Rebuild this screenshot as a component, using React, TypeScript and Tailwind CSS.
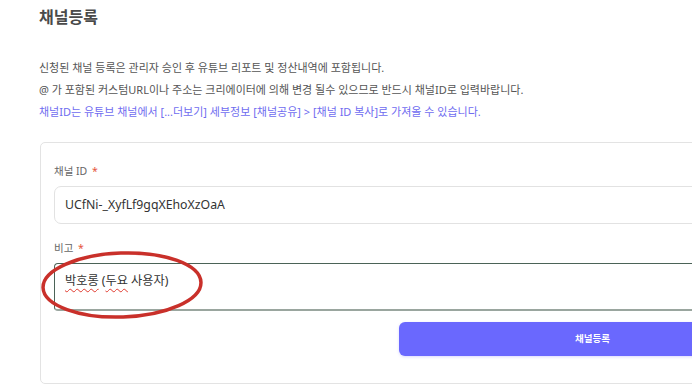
import React from "react";

export default function App() {
  const font = { fontFamily: '"Noto Sans", "Noto Sans CJK KR", sans-serif' };
  return (
    <div
      className="relative w-[692px] h-[384px] overflow-hidden bg-white text-[#555]"
      style={font}
    >
      <div className="pl-[39px] pt-[5px] w-[820px]">
        <h1 className="text-[16px] font-bold leading-[24px] text-[#4a4a4a]">채널등록</h1>
        <div className="mt-[30px] flex flex-col gap-[4px] text-[11px] leading-[18px]">
          <p>신청된 채널 등록은 관리자 승인 후 유튜브 리포트 및 정산내역에 포함됩니다.</p>
          <p>@ 가 포함된 커스텀URL이나 주소는 크리에이터에 의해 변경 될수 있으므로 반드시 채널ID로 입력바랍니다.</p>
          <p className="text-[#6f6cf0]">
            채널ID는 유튜브 채널에서 [...더보기] 세부정보 [채널공유] &gt; [채널 ID 복사]로 가져올 수 있습니다.
          </p>
        </div>
        <div className="mt-[21px] ml-[1px] w-[760px] rounded-[5px] border border-[#e3e3e3] px-[13px] pt-[20px] pb-[27px]">
          <label className="block text-[10.5px] leading-[16px] text-[#666]">
            채널 ID <span className="ml-[2px] text-[#e5533d]">*</span>
          </label>
          <div className="mt-[7px] h-[38px] rounded-[7px] border border-[#e2e2e2] flex items-center px-[10px] text-[12.3px] text-[#333]">
            UCfNi-_XyfLf9gqXEhoXzOaA
          </div>
          <label className="mt-[16px] block text-[10.5px] leading-[16px] text-[#666]">
            비고 <span className="ml-[2px] text-[#e5533d]">*</span>
          </label>
          <div className="mt-[7px] h-[48px] rounded-[4px] border border-[#4b6357] border-b-[2px] border-b-[#9aa69f] flex items-start px-[10px] pt-[7px]">
            <div className="text-[12.2px] leading-[20px] text-[#333] whitespace-pre">
              <span className="underline decoration-wavy decoration-[#e03a2f] decoration-[1px] underline-offset-[3px]">박호롱</span>
              <span> (</span>
              <span className="underline decoration-wavy decoration-[#e03a2f] decoration-[1px] underline-offset-[3px]">두요</span>
              <span> 사용자)</span>
            </div>
          </div>
          <div className="mt-[11px] flex justify-end">
            <button className="w-[387px] h-[34px] rounded-[6px] bg-[#6a68fe] text-white text-[9.5px] font-bold shadow-[0_1px_3px_rgba(106,104,254,0.25)]">
              채널등록
            </button>
          </div>
        </div>
      </div>
      <svg
        className="absolute left-0 top-0 pointer-events-none"
        width="692"
        height="384"
        viewBox="0 0 692 384"
      >
        <ellipse
          cx="122"
          cy="285"
          rx="79"
          ry="32"
          transform="rotate(-2 122 285)"
          fill="none"
          stroke="#c9302a"
          strokeWidth="3.5"
        />
      </svg>
    </div>
  );
}
